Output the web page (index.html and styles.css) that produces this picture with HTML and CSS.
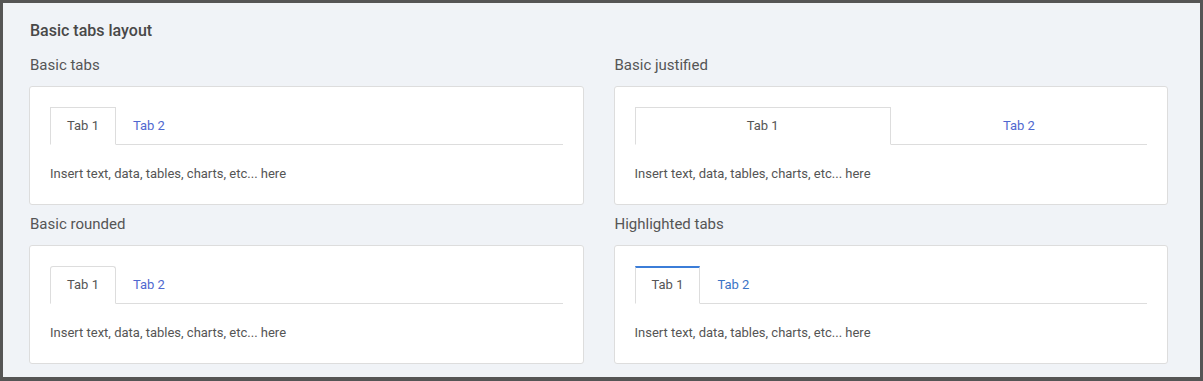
FILE: index.html
```html
<!DOCTYPE html>
<html lang="en">
<head>
  <meta charset="UTF-8" />
  <meta name="viewport" content="width=device-width, initial-scale=1.0" />
  <title>Basic tabs layout</title>
  <link rel="stylesheet" href="styles.css">
</head>
<body>
  <div class="frame">
    <h1 class="page-title">Basic tabs layout</h1>
    <div class="grid">
      <section class="block">
        <h2 class="block-title">Basic tabs</h2>
        <div class="card">
          <ul class="tabs">
            <li class="tab active">Tab 1</li>
            <li class="tab">Tab 2</li>
          </ul>
          <p class="content">Insert text, data, tables, charts, etc... here</p>
        </div>
      </section>
      <section class="block">
        <h2 class="block-title">Basic justified</h2>
        <div class="card">
          <ul class="tabs justified">
            <li class="tab active">Tab 1</li>
            <li class="tab">Tab 2</li>
          </ul>
          <p class="content">Insert text, data, tables, charts, etc... here</p>
        </div>
      </section>
      <section class="block">
        <h2 class="block-title">Basic rounded</h2>
        <div class="card">
          <ul class="tabs rounded">
            <li class="tab active">Tab 1</li>
            <li class="tab">Tab 2</li>
          </ul>
          <p class="content">Insert text, data, tables, charts, etc... here</p>
        </div>
      </section>
      <section class="block">
        <h2 class="block-title">Highlighted tabs</h2>
        <div class="card">
          <ul class="tabs highlighted">
            <li class="tab active">Tab 1</li>
            <li class="tab">Tab 2</li>
          </ul>
          <p class="content">Insert text, data, tables, charts, etc... here</p>
        </div>
      </section>
    </div>
  </div>
</body>
</html>
```

FILE: styles.css
```css
* {
  box-sizing: border-box;
}
body {
  margin: 0;
  font-family: Roboto, 'Liberation Sans', sans-serif;
  color: #555;
}
.frame {
  height: 100vh;
  background: #f0f3f7;
  border: 3px solid #555;
  border-bottom-width: 4px;
  padding: 18px 32px 0 26px;
  overflow: hidden;
}
.page-title {
  margin: 0 0 0 1px;
  font-size: 16px;
  font-weight: 500;
  line-height: 20px;
  color: #484848;
}
.grid {
  display: grid;
  grid-template-columns: 1fr 1fr;
  column-gap: 30px;
}
.block-title {
  margin: 14px 0 11px 1px;
  font-size: 15px;
  font-weight: 400;
  line-height: 20px;
  color: #555;
}
.block:nth-child(n+3) .block-title {
  margin-top: 9px;
}
.card {
  background: #fff;
  border: 1px solid #ddd;
  border-radius: 3px;
  padding: 20px 20px 21px;
}
.tabs {
  display: flex;
  margin: 0;
  padding: 0;
  list-style: none;
  border-bottom: 1px solid #ddd;
}
.tab {
  font-size: 13px;
  line-height: 18px;
  padding: 9px 16px 9px;
  margin-bottom: -1px;
  border: 1px solid transparent;
  color: #4f68cf;
}
.tab.active {
  color: #555;
  background: #fff;
  border-color: #ddd #ddd #fff;
}
.justified .tab {
  flex: 1;
  text-align: center;
}
.rounded .tab {
  border-radius: 3px 3px 0 0;
}
.highlighted .tab {
  color: #3a74c6;
}
.highlighted .tab.active {
  color: #555;
  border-top: 2px solid #3b7dd8;
  padding-top: 8px;
}
.content {
  margin: 20px 0 0;
  font-size: 13px;
  line-height: 18px;
  color: #555;
}
```
